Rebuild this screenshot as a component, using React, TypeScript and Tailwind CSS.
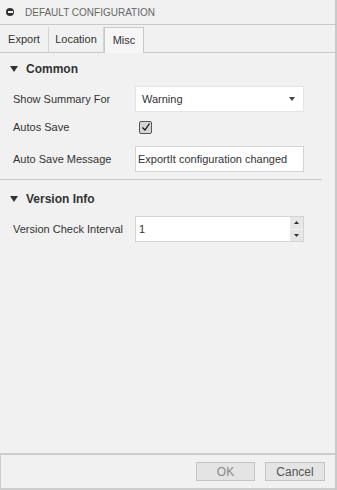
import { useState } from "react";

const font = { fontFamily: '"Liberation Sans", Arial, sans-serif' };

function Caret() {
  return (
    <svg width="8" height="6" viewBox="0 0 8 6" className="shrink-0">
      <path d="M0 0 L8 0 L4 6 Z" fill="#333" />
    </svg>
  );
}

export default function App() {
  const [autoSave, setAutoSave] = useState(true);
  const [tab, setTab] = useState("Misc");
  const tabs = [
    { name: "Export", w: "w-[49px]" },
    { name: "Location", w: "w-[55px]" },
    { name: "Misc", w: "w-[40px]" },
  ];

  return (
    <div style={font} className="w-[337px] h-[490px] bg-[#f1f1f1] border-r-2 border-[#c9c9c9] flex flex-col text-[11px] text-[#333] overflow-hidden">
      {/* title */}
      <div className="h-[25px] flex items-center gap-[11px] pl-[6px] border-b border-[#c9c9c9] shrink-0">
        <div className="w-[8px] h-[8px] rounded-full bg-[#333] flex items-center justify-center">
          <div className="w-[5px] h-[1.5px] bg-[#f1f1f1]" />
        </div>
        <span className="text-[10px] text-[#666]">DEFAULT CONFIGURATION</span>
      </div>

      {/* tabs */}
      <div className="flex items-end h-[28px] shrink-0 border-b border-[#c9c9c9]">
        {tabs.map((t) =>
          t.name === tab ? (
            <button
              key={t.name}
              onClick={() => setTab(t.name)}
              className={`${t.w} h-[26px] bg-[#f6f6f6] border border-b-0 border-[#c9c9c9] -mb-px text-[11px] text-[#333]`}
            >
              {t.name}
            </button>
          ) : (
            <button
              key={t.name}
              onClick={() => setTab(t.name)}
              className={`${t.w} h-[25px] border-r border-[#d4d4d4] last:border-r-0 text-[11px] text-[#333]`}
            >
              {t.name}
            </button>
          )
        )}
      </div>

      {/* content */}
      <div className="flex-1 flex flex-col bg-[#f1f1f1]">
        <div className="flex items-center gap-[8px] pl-[10px] mt-[9px] h-[14px]">
          <Caret />
          <span className="font-bold text-[12px] text-[#333]">Common</span>
        </div>

        <div className="flex items-center mt-[10px] pl-[13px] h-[26px]">
          <span className="w-[122px]">Show Summary For</span>
          <div className="w-[169px] h-[26px] bg-white border border-[#e4e4e4] flex items-center justify-between pl-[6px] pr-[8px]">
            <span>Warning</span>
            <svg width="6" height="4" viewBox="0 0 6 4">
              <path d="M0 0 L6 0 L3 4 Z" fill="#444" />
            </svg>
          </div>
        </div>

        <div className="flex items-center mt-[9px] pl-[13px] h-[12px]">
          <span className="w-[126px]">Autos Save</span>
          <button
            onClick={() => setAutoSave(!autoSave)}
            className="w-[13px] h-[13px] rounded-[2px] border border-[#555] bg-[#d6d6d6] flex items-center justify-center"
          >
            {autoSave && (
              <svg width="10" height="10" viewBox="0 0 10 10">
                <path d="M1.5 5.5 L4 8 L8.5 1.5" fill="none" stroke="#111" strokeWidth="1.3" />
              </svg>
            )}
          </button>
        </div>

        <div className="flex items-center mt-[13px] pl-[13px] h-[26px]">
          <span className="w-[122px]">Auto Save Message</span>
          <div className="w-[169px] h-[26px] bg-white border border-[#d4d4d4] flex items-center pl-[2px]">
            <span>ExportIt configuration changed</span>
          </div>
        </div>

        <div className="h-px bg-[#c9c9c9] mt-[7px] w-[322px]" />

        <div className="flex items-center gap-[8px] pl-[10px] mt-[12px] h-[14px]">
          <Caret />
          <span className="font-bold text-[12px] text-[#333]">Version Info</span>
        </div>

        <div className="flex items-center mt-[10px] pl-[13px] h-[26px]">
          <span className="w-[122px]">Version Check Interval</span>
          <div className="w-[169px] h-[26px] bg-white border border-[#d4d4d4] flex items-center justify-between pl-[3px]">
            <span>1</span>
            <div className="flex flex-col h-full w-[13px] bg-[#e6e6e6]">
              <div className="flex-1 flex items-center justify-center border-b border-[#f4f4f4]">
                <svg width="5" height="3" viewBox="0 0 5 3">
                  <path d="M0 3 L5 3 L2.5 0 Z" fill="#333" />
                </svg>
              </div>
              <div className="flex-1 flex items-center justify-center">
                <svg width="5" height="3" viewBox="0 0 5 3">
                  <path d="M0 0 L5 0 L2.5 3 Z" fill="#333" />
                </svg>
              </div>
            </div>
          </div>
        </div>
      </div>

      {/* footer */}
      <div className="h-[37px] border-t-2 border-b-2 border-l border-[#cdcdcd] flex items-start justify-end gap-[10px] pt-[7px] pr-[10px] shrink-0">
        <button className="w-[59px] h-[19px] bg-[#e4e4e4] border border-[#c4c4c4] text-[12px] text-[#888]">OK</button>
        <button className="w-[60px] h-[19px] bg-[#e4e4e4] border border-[#c4c4c4] text-[12px] text-[#555]">Cancel</button>
      </div>
    </div>
  );
}
